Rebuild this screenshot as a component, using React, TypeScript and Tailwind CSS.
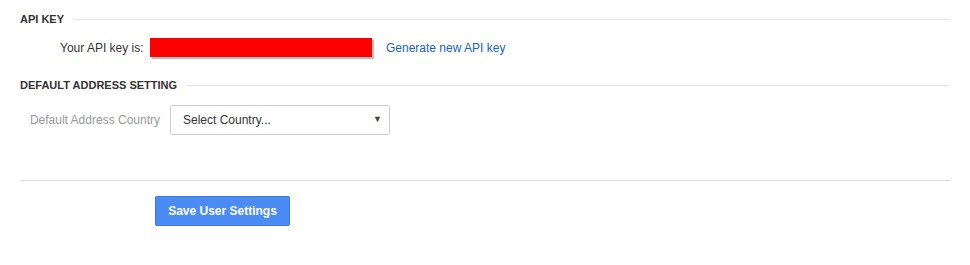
import React from "react";

function SectionHeader({ title }: { title: string }) {
  return (
    <div className="flex h-[14px] items-center gap-[9px]">
      <span className="text-[11px] font-bold uppercase leading-none text-[#333]">{title}</span>
      <div className="h-px flex-1 bg-[#e6e6e6]" />
    </div>
  );
}

export default function App() {
  return (
    <div className="h-[265px] w-[970px] bg-white pl-[20px] pr-[20px] pt-[12px] font-['Liberation_Sans',Arial,sans-serif] text-[12px] text-[#333]">
      <SectionHeader title="API Key" />
      <div className="mt-[12px] flex h-[19px] items-center">
        <span className="ml-[40px] w-[84px]">Your API key is:</span>
        <div className="ml-[6px] h-[19px] w-[222px] bg-[#ff0000] shadow-[2px_2px_1px_rgba(0,0,0,0.25)]" />
        <a href="#" className="ml-[14px] text-[#1a62c4]">Generate new API key</a>
      </div>
      <div className="mt-[21px]">
        <SectionHeader title="Default Address Setting" />
      </div>
      <div className="mt-[13px] flex h-[30px] items-center">
        <span className="w-[140px] pr-0 text-right text-[#999]">Default Address Country</span>
        <div className="ml-[10px] flex h-[30px] w-[220px] items-center justify-between rounded-[3px] border border-[#ccc] pl-[12px] pr-[7px]">
          <span className="text-[#333]">Select Country...</span>
          <span className="text-[9px] text-[#444]">▼</span>
        </div>
      </div>
      <div className="mt-[45px] h-px w-[930px] bg-[#ddd]" />
      <div className="mt-[15px] pl-[135px]">
        <button className="h-[30px] w-[135px] rounded-[2px] border border-[#3b79e0] bg-[#4b8bf4] text-[12px] font-bold text-white">
          Save User Settings
        </button>
      </div>
    </div>
  );
}
